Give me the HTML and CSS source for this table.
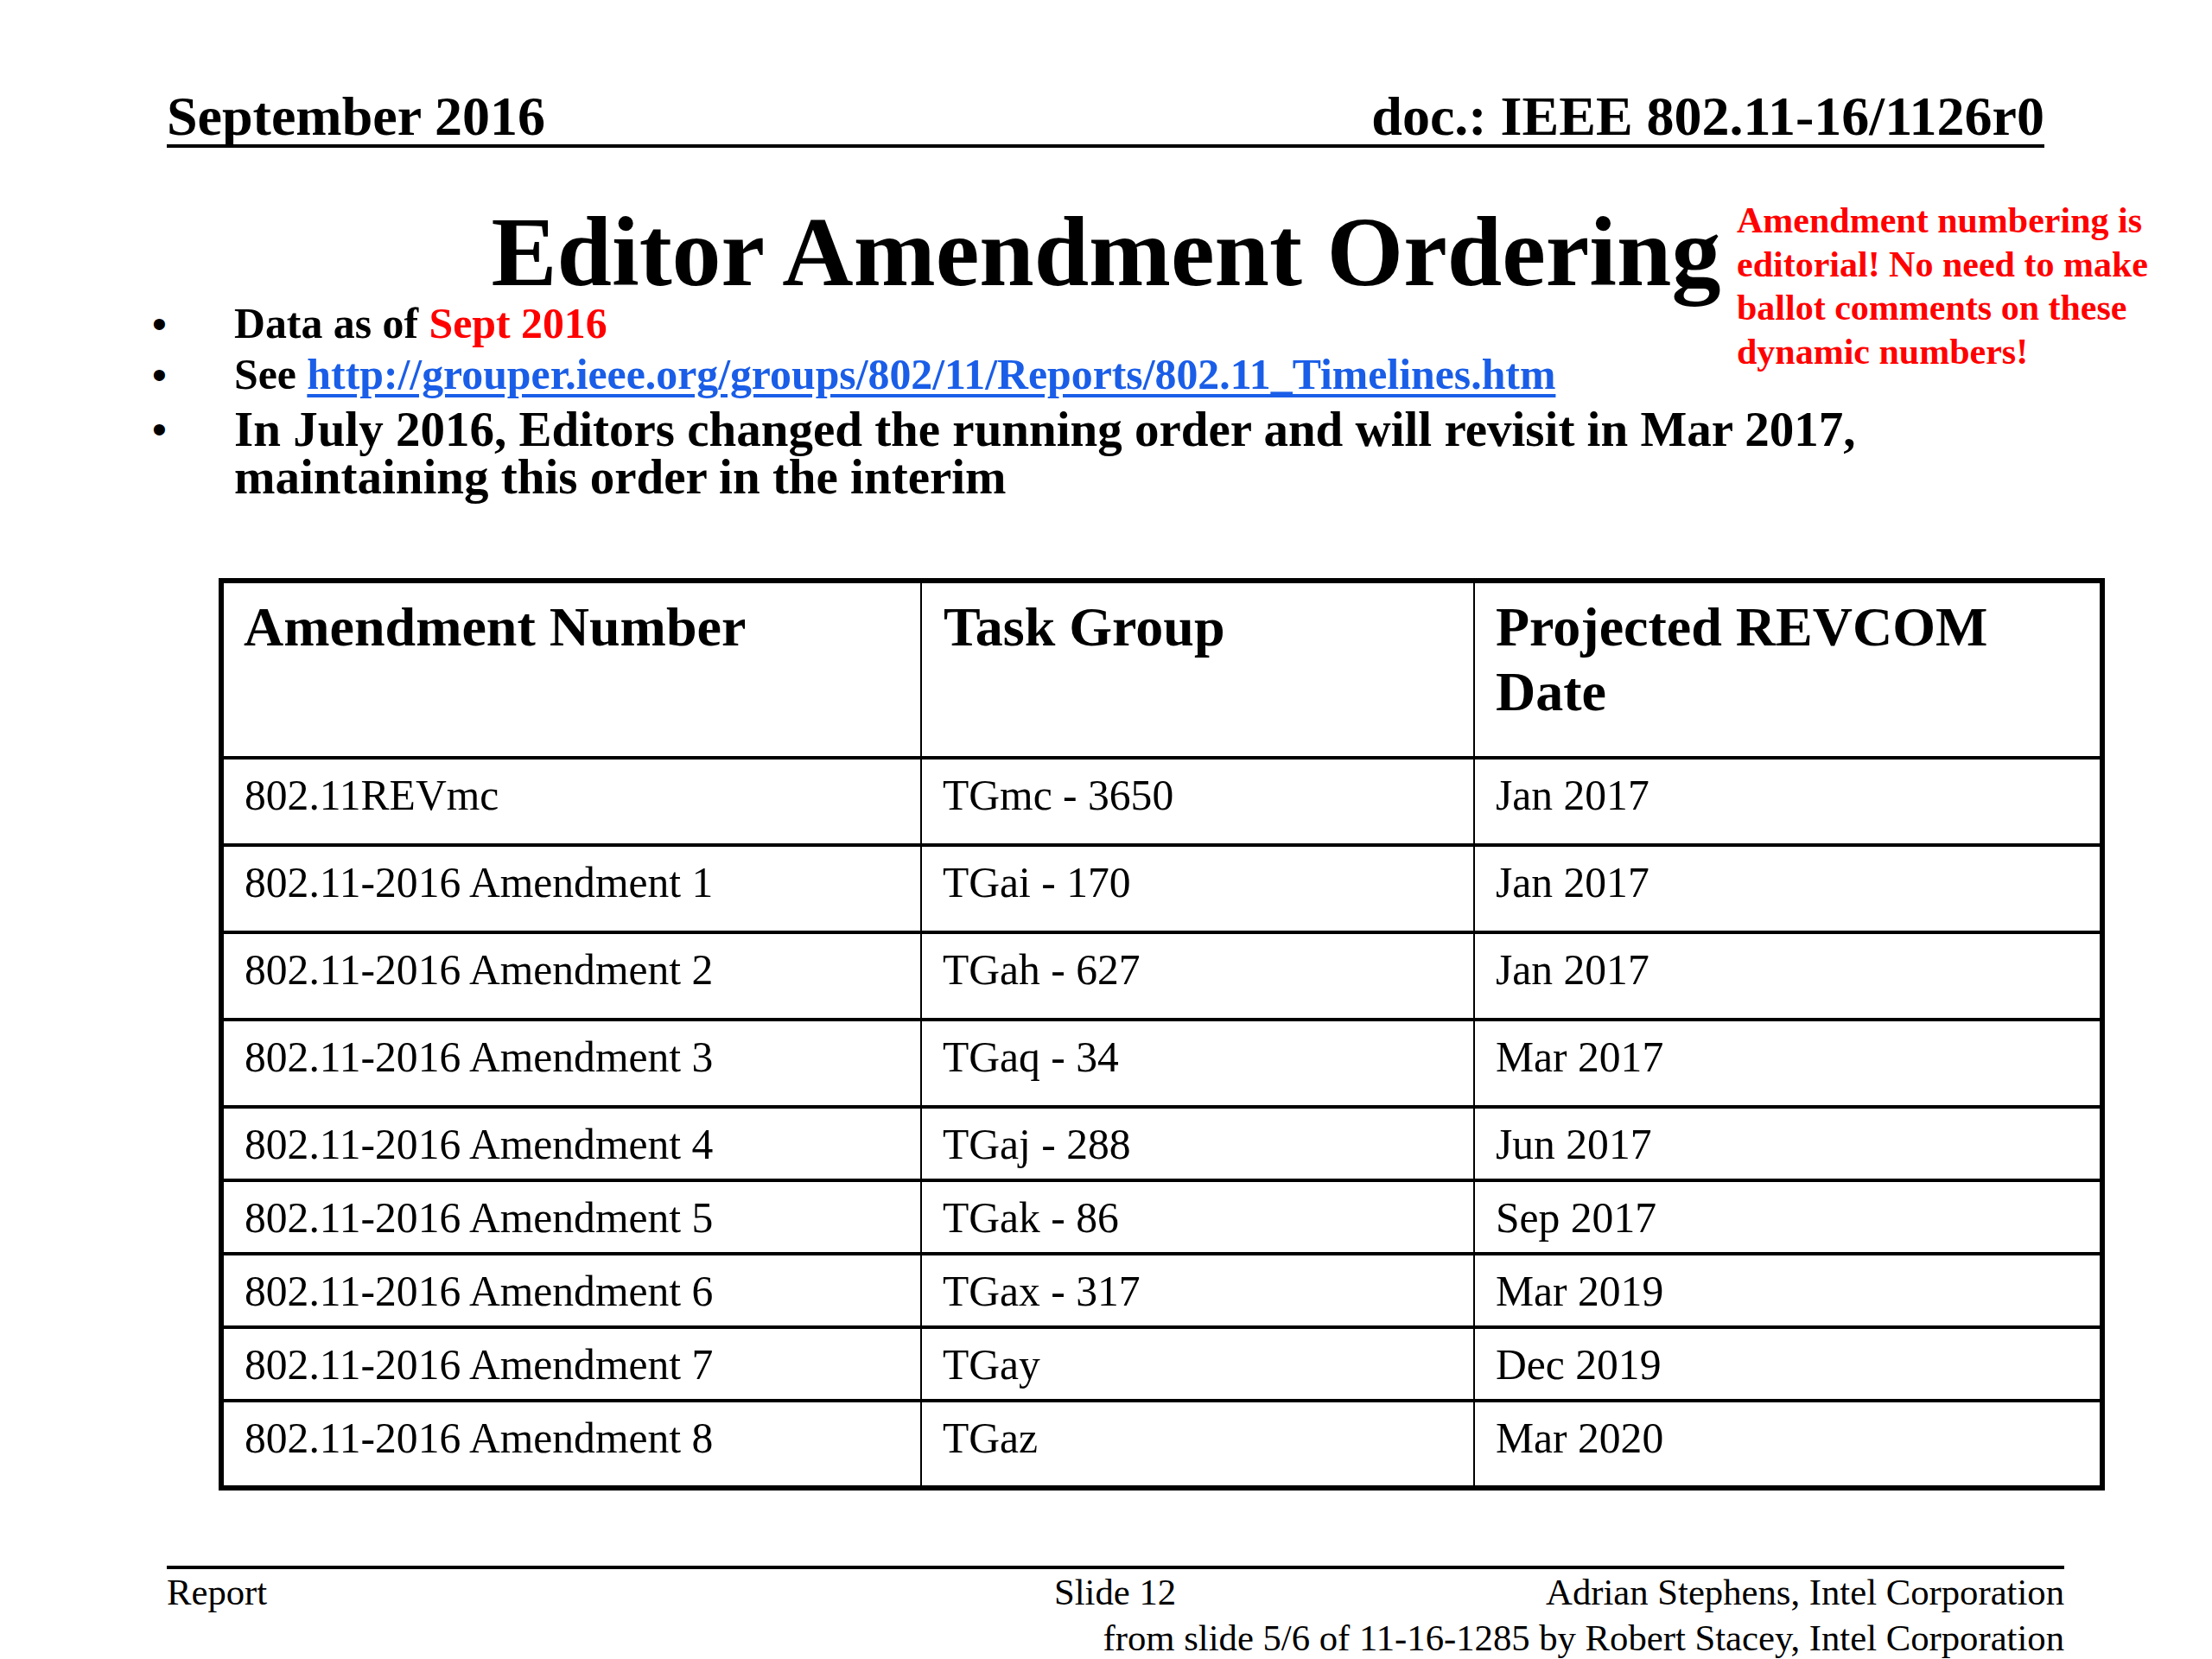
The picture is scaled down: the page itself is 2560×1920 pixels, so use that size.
FILE: index.html
```html
<!DOCTYPE html>
<html lang="en">
<head>
<meta charset="utf-8">
<title>Editor Amendment Ordering</title>
<link rel="stylesheet" href="styles.css">
</head>
<body>
<div class="slide">
  <header class="doc-header">
    <span>September 2016</span>
    <span>doc.: IEEE 802.11-16/1126r0</span>
  </header>

  <h1 class="title">Editor Amendment Ordering</h1>

  <p class="note">Amendment numbering is<br>editorial! No need to make<br>ballot comments on these<br>dynamic numbers!</p>

  <ul class="bullets">
    <li class="b14"><span class="dot">•</span><span>Data as of <span class="red">Sept 2016</span></span></li>
    <li class="b14"><span class="dot">•</span><span>See <a class="link" href="#">http://grouper.ieee.org/groups/802/11/Reports/802.11_Timelines.htm</a></span></li>
    <li class="b16"><span class="dot">•</span><span>In July 2016, Editors changed the running order and will revisit in Mar 2017,<br>maintaining this order in the interim</span></li>
  </ul>

  <table class="amend">
    <thead>
      <tr class="r-head">
        <th class="c1">Amendment Number</th>
        <th class="c2">Task Group</th>
        <th class="c3">Projected REVCOM Date</th>
      </tr>
    </thead>
    <tbody>
      <tr class="r-tall"><td>802.11REVmc</td><td>TGmc - 3650</td><td>Jan 2017</td></tr>
      <tr class="r-tall"><td>802.11-2016 Amendment 1</td><td>TGai - 170</td><td>Jan 2017</td></tr>
      <tr class="r-tall"><td>802.11-2016 Amendment 2</td><td>TGah - 627</td><td>Jan 2017</td></tr>
      <tr class="r-tall"><td>802.11-2016 Amendment 3</td><td>TGaq - 34</td><td>Mar 2017</td></tr>
      <tr class="r-short"><td>802.11-2016 Amendment 4</td><td>TGaj - 288</td><td>Jun 2017</td></tr>
      <tr class="r-short"><td>802.11-2016 Amendment 5</td><td>TGak - 86</td><td>Sep 2017</td></tr>
      <tr class="r-short"><td>802.11-2016 Amendment 6</td><td>TGax - 317</td><td>Mar 2019</td></tr>
      <tr class="r-short"><td>802.11-2016 Amendment 7</td><td>TGay</td><td>Dec 2019</td></tr>
      <tr class="r-last"><td>802.11-2016 Amendment 8</td><td>TGaz</td><td>Mar 2020</td></tr>
    </tbody>
  </table>

  <footer class="doc-footer">
    <div class="frow">
      <span class="f-left">Report</span>
      <span class="f-mid">Slide 12</span>
      <span class="f-right">Adrian Stephens, Intel Corporation</span>
    </div>
    <div class="f-sub">from slide 5/6 of 11-16-1285 by Robert Stacey, Intel Corporation</div>
  </footer>
</div>
</body>
</html>
```

FILE: styles.css
```css
body {
  margin: 0;
  background: #ffffff;
}

.slide {
  position: relative;
  width: 2560px;
  height: 1920px;
  overflow: hidden;
  font-family: "Liberation Serif", "Times New Roman", serif;
  color: #000000;
}

.doc-header {
  display: flex;
  justify-content: space-between;
  width: 2173px;
  margin: 0 0 0 193px;
  padding-top: 103px;
  font-size: 64px;
  line-height: 64px;
  font-weight: bold;
  border-bottom: 4px solid #000000;
}

.title {
  margin: 68px 0 0;
  text-align: center;
  font-size: 114px;
  line-height: 106px;
  font-weight: bold;
}

.note {
  position: absolute;
  left: 2010px;
  top: 230px;
  margin: 0;
  font-size: 42px;
  line-height: 50.7px;
  font-weight: bold;
  color: #ff0000;
  white-space: nowrap;
}

.bullets {
  list-style: none;
  margin: 0 0 0 176px;
  padding: 0;
  font-weight: bold;
}

.bullets li {
  display: flex;
}

.b14 {
  font-size: 49.8px;
  line-height: 59px;
}

.b16 {
  font-size: 57px;
  line-height: 55px;
  margin-top: 6px;
}

.dot {
  flex: none;
  width: 95px;
  font-family: "Liberation Sans", Arial, sans-serif;
  font-weight: normal;
  font-size: 48px;
}

.red {
  color: #ff0000;
}

.link {
  color: #1a5ee8;
  text-decoration: underline;
  text-decoration-thickness: 4px;
  text-underline-offset: 6px;
}

.amend {
  border-collapse: separate;
  border-spacing: 0;
  table-layout: fixed;
  width: 2183px;
  margin: 90px 0 0 253px;
  border: 6px solid #000000;
}

.amend th,
.amend td {
  box-sizing: border-box;
  vertical-align: top;
  text-align: left;
  padding: 13px 24px 0 24px;
  border-right: 2px solid #000000;
  border-bottom: 4px solid #000000;
}

.amend th:last-child,
.amend td:last-child {
  border-right: none;
}

.amend tr.r-last td {
  border-bottom: none;
}

.amend .c1 { width: 808px; padding-left: 23px; }
.amend .c2 { width: 640px; padding-left: 25px; }
.amend .c3 { width: 723px; }

.amend th {
  font-size: 64px;
  line-height: 75px;
  font-weight: bold;
}

.amend td {
  font-size: 49.6px;
  line-height: 58px;
  font-weight: normal;
}

.r-head { height: 204px; }
.r-tall { height: 101px; }
.r-short { height: 85px; }
.r-last { height: 96px; }

.doc-footer {
  width: 2196px;
  margin: 87px 0 0 193px;
  border-top: 4px solid #000000;
  font-size: 42.7px;
  line-height: 53px;
}

.frow {
  display: flex;
}

.f-left {
  width: 1027px;
  flex: none;
}

.f-mid {
  flex: 1;
}

.f-sub {
  text-align: right;
}
```
